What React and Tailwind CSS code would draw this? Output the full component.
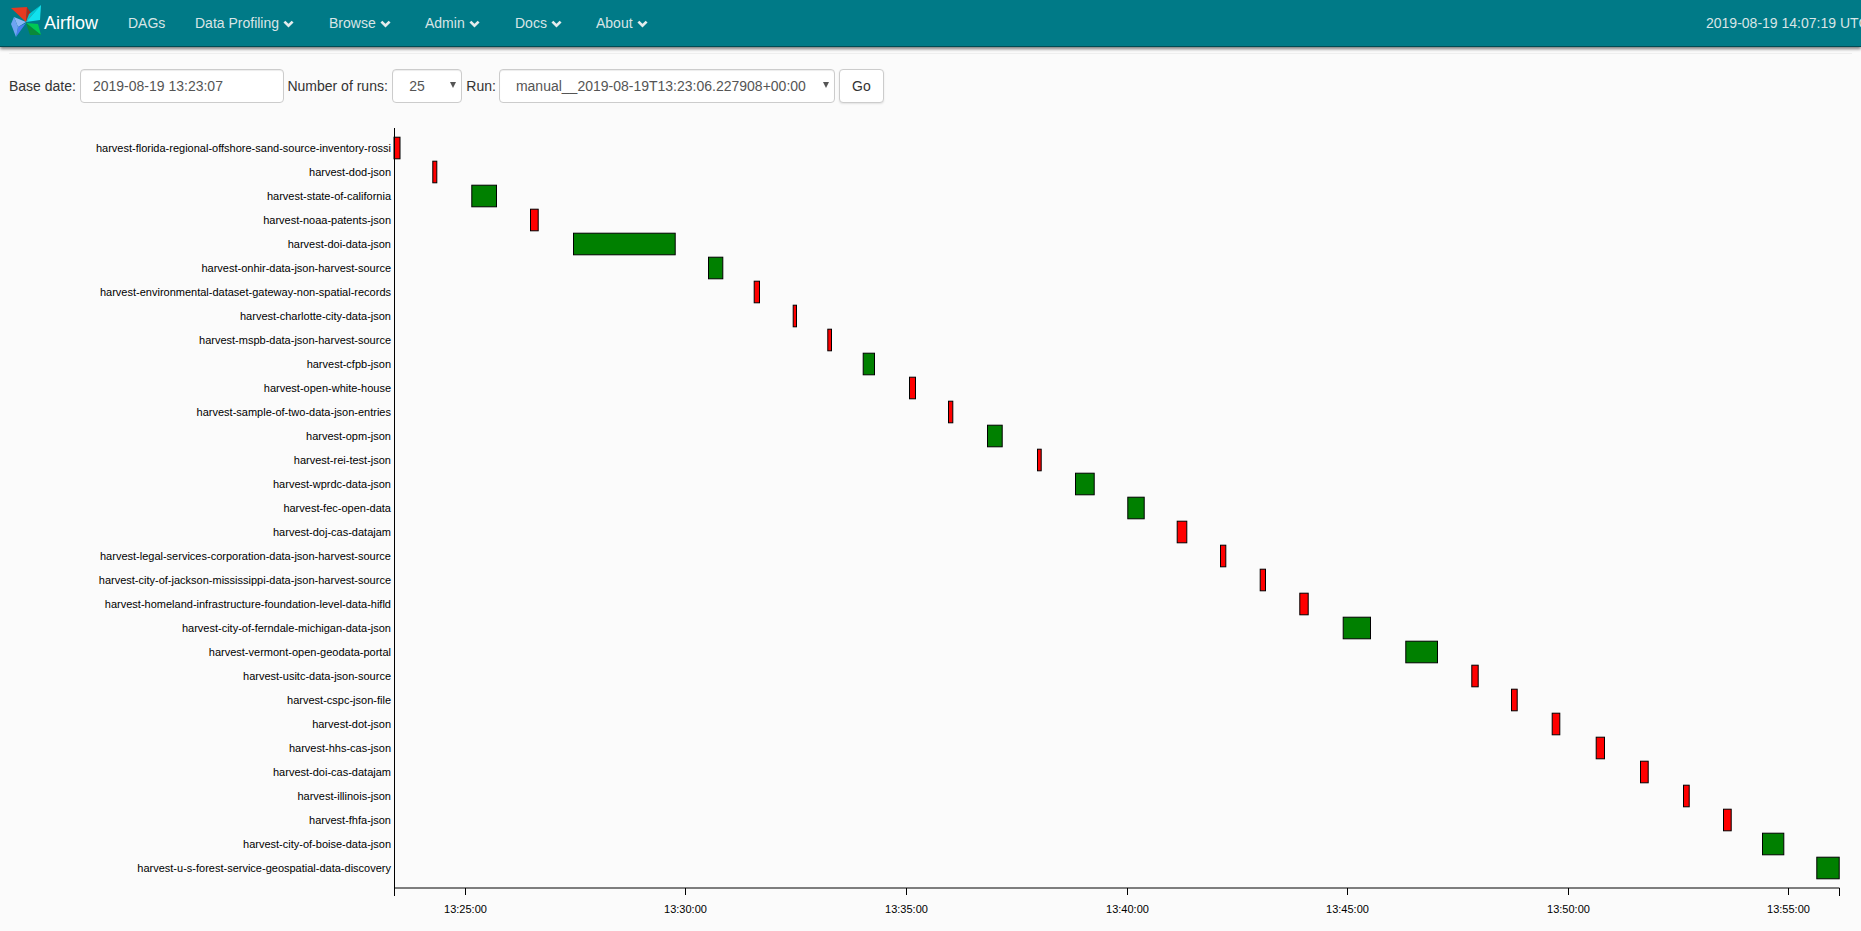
// App.jsx - Airflow gantt view
import React from 'react';

const tasks = [
  ['harvest-florida-regional-offshore-sand-source-inventory-rossi', 394, 400, 'red'],
  ['harvest-dod-json', 432.8, 436.8, 'red'],
  ['harvest-state-of-california', 471.8, 496.5, 'green'],
  ['harvest-noaa-patents-json', 530.5, 538.2, 'red'],
  ['harvest-doi-data-json', 573.5, 675.2, 'green'],
  ['harvest-onhir-data-json-harvest-source', 708.5, 722.8, 'green'],
  ['harvest-environmental-dataset-gateway-non-spatial-records', 754.2, 759.5, 'red'],
  ['harvest-charlotte-city-data-json', 793.2, 796.5, 'red'],
  ['harvest-mspb-data-json-harvest-source', 827.8, 831.5, 'red'],
  ['harvest-cfpb-json', 863.2, 874.5, 'green'],
  ['harvest-open-white-house', 909.5, 915.5, 'red'],
  ['harvest-sample-of-two-data-json-entries', 948.5, 952.8, 'red'],
  ['harvest-opm-json', 987.5, 1002.2, 'green'],
  ['harvest-rei-test-json', 1037.5, 1041.2, 'red'],
  ['harvest-wprdc-data-json', 1075.5, 1094.2, 'green'],
  ['harvest-fec-open-data', 1127.8, 1144.2, 'green'],
  ['harvest-doj-cas-datajam', 1177.2, 1186.8, 'red'],
  ['harvest-legal-services-corporation-data-json-harvest-source', 1220.5, 1225.8, 'red'],
  ['harvest-city-of-jackson-mississippi-data-json-harvest-source', 1260.2, 1265.5, 'red'],
  ['harvest-homeland-infrastructure-foundation-level-data-hifld', 1299.8, 1308.2, 'red'],
  ['harvest-city-of-ferndale-michigan-data-json', 1343.2, 1370.5, 'green'],
  ['harvest-vermont-open-geodata-portal', 1405.8, 1437.5, 'green'],
  ['harvest-usitc-data-json-source', 1471.8, 1478.2, 'red'],
  ['harvest-cspc-json-file', 1511.5, 1517.2, 'red'],
  ['harvest-dot-json', 1552.2, 1559.8, 'red'],
  ['harvest-hhs-cas-json', 1596.2, 1604.5, 'red'],
  ['harvest-doi-cas-datajam', 1640.5, 1648.2, 'red'],
  ['harvest-illinois-json', 1683.5, 1689.2, 'red'],
  ['harvest-fhfa-json', 1723.5, 1731.2, 'red'],
  ['harvest-city-of-boise-data-json', 1762.5, 1783.8, 'green'],
  ['harvest-u-s-forest-service-geospatial-data-discovery', 1816.8, 1839.2, 'green'],
];

const ticks = [
  [465.5, '13:25:00'],
  [685.5, '13:30:00'],
  [906.5, '13:35:00'],
  [1127.5, '13:40:00'],
  [1347.5, '13:45:00'],
  [1568.5, '13:50:00'],
  [1788.5, '13:55:00'],
];

const navItems = [
  { label: 'DAGs', className: 'w-[67px]' },
  { label: 'Data Profiling', caret: true, className: 'w-[134px]' },
  { label: 'Browse', caret: true, className: 'w-[96px]' },
  { label: 'Admin', caret: true, className: 'w-[90px]' },
  { label: 'Docs', caret: true, className: 'w-[81px]' },
  { label: 'About', caret: true, className: 'w-[90px]' },
];

const Caret = () => (
  <svg width="11" height="8" viewBox="0 0 11 8" className="ml-[4px] mt-[1px]">
    <path d="M1.4 1.6 L5.5 5.7 L9.6 1.6" fill="none" stroke="#e4eced" strokeWidth="2.7" />
  </svg>
);

const Logo = () => (
  <svg width="38" height="38" viewBox="0 0 38 38" className="shrink-0">
    <polygon points="4,4 20,3 19,18" fill="#e43921" />
    <polygon points="20,3 27,14 19,18" fill="#a82a1c" />
    <polygon points="34,1 22,10 19,18" fill="#00c7d4" />
    <polygon points="34,1 33,16 19,18" fill="#11e1ee" />
    <polygon points="19,19 31,20 34,31" fill="#00c853" />
    <polygon points="19,19 34,31 23,31" fill="#0a8a3a" />
    <polygon points="7,13 19,18 11,23" fill="#8db8f5" />
    <polygon points="11,23 19,19 9,33" fill="#4a7ef0" />
    <polygon points="7,13 11,23 9,33 4,20" fill="#6fa3f2" />
  </svg>
);

const Arrow = () => (
  <svg width="6" height="6" viewBox="0 0 6 6" className="pointer-events-none absolute right-[6px] top-[13px]">
    <polygon points="0,0 6,0 3,6" fill="#555" />
  </svg>
);

const Gantt = () => (
  <svg width="1861" height="810" viewBox="0 0 1861 810" className="block" style={{ fontFamily: '"Liberation Sans", Arial, sans-serif' }}>
    {tasks.map(([name, start, end, color], i) => {
      const cy = 148 - 121 + 24 * i;
      return (
        <g key={name}>
          <text x="391" y={cy + 4} textAnchor="end" fontSize="11" fill="#000">{name}</text>
          <rect x={start} y={cy - 10.8} width={end - start} height="21.6" fill={color === 'red' ? '#ff0000' : '#008000'} stroke="#000" strokeWidth="1" />
        </g>
      );
    })}
    {/* axes */}
    <path d="M394.5 7 V767" stroke="#000" strokeWidth="1" fill="none" />
    <path d="M394.5 775 V767 H1839.5 V775" stroke="#000" strokeWidth="1" fill="none" />
    {ticks.map(([x, label]) => (
      <g key={label}>
        <line x1={x} x2={x} y1="767" y2="774" stroke="#000" />
        <text x={x} y="792" textAnchor="middle" fontSize="11" fill="#000">{label}</text>
      </g>
    ))}
  </svg>
);

export default function App() {
  return (
    <div className="h-[931px] w-[1861px] overflow-hidden bg-[#fbfbfb] font-['Liberation_Sans',Arial,sans-serif] text-[14px] text-[#333]">
      <nav className="flex h-[47px] items-center border-b border-[#004b54] bg-[#007a87] shadow-[0_2px_3px_rgba(0,0,0,0.5)]">
        <div className="flex w-[128px] shrink-0 items-center pl-[7px]">
          <Logo />
          <span className="-ml-[1px] text-[18px] text-white">Airflow</span>
        </div>
        {navItems.map((item) => (
          <a key={item.label} className={`flex shrink-0 items-center text-[#d9e5e6] ${item.className}`}>
            {item.label}
            {item.caret && <Caret />}
          </a>
        ))}
        <span className="shrink-0 whitespace-nowrap pl-[1020px] text-[#d9e5e6]">2019-08-19 14:07:19 UTC</span>
      </nav>

      <hr className="mx-[9px] mt-[6px] border-t border-[#eeeeee]" />

      <form className="flex items-center pl-[9px] pt-[15px]">
        <label className="mr-[4px]">Base date:</label>
        <input
          defaultValue="2019-08-19 13:23:07"
          className="h-[34px] w-[204px] rounded-[4px] border border-[#cccccc] bg-white px-[12px] text-[#555] shadow-[inset_0_1px_1px_rgba(0,0,0,0.075)]"
        />
        <label className="ml-[3.5px] mr-[4.5px]">Number of runs:</label>
        <div className="relative w-[70px]">
          <select defaultValue="25" className="h-[34px] w-full appearance-none rounded-[4px] border border-[#cccccc] bg-white pl-[16px] text-[#555] shadow-[inset_0_1px_1px_rgba(0,0,0,0.075)]">
            <option>25</option>
          </select>
          <Arrow />
        </div>
        <label className="ml-[4px] mr-[3px]">Run:</label>
        <div className="relative w-[336px]">
          <select className="h-[34px] w-full appearance-none rounded-[4px] border border-[#cccccc] bg-white pl-[16px] text-[#555] shadow-[inset_0_1px_1px_rgba(0,0,0,0.075)]">
            <option>manual__2019-08-19T13:23:06.227908+00:00</option>
          </select>
          <Arrow />
        </div>
        <button type="button" className="ml-[4px] h-[34px] w-[45px] rounded-[4px] border border-[#cccccc] bg-white text-[#333] shadow-[0_1px_2px_rgba(0,0,0,0.1)]">Go</button>
      </form>

      <div className="mt-[18px]">
        <Gantt />
      </div>
    </div>
  );
}
